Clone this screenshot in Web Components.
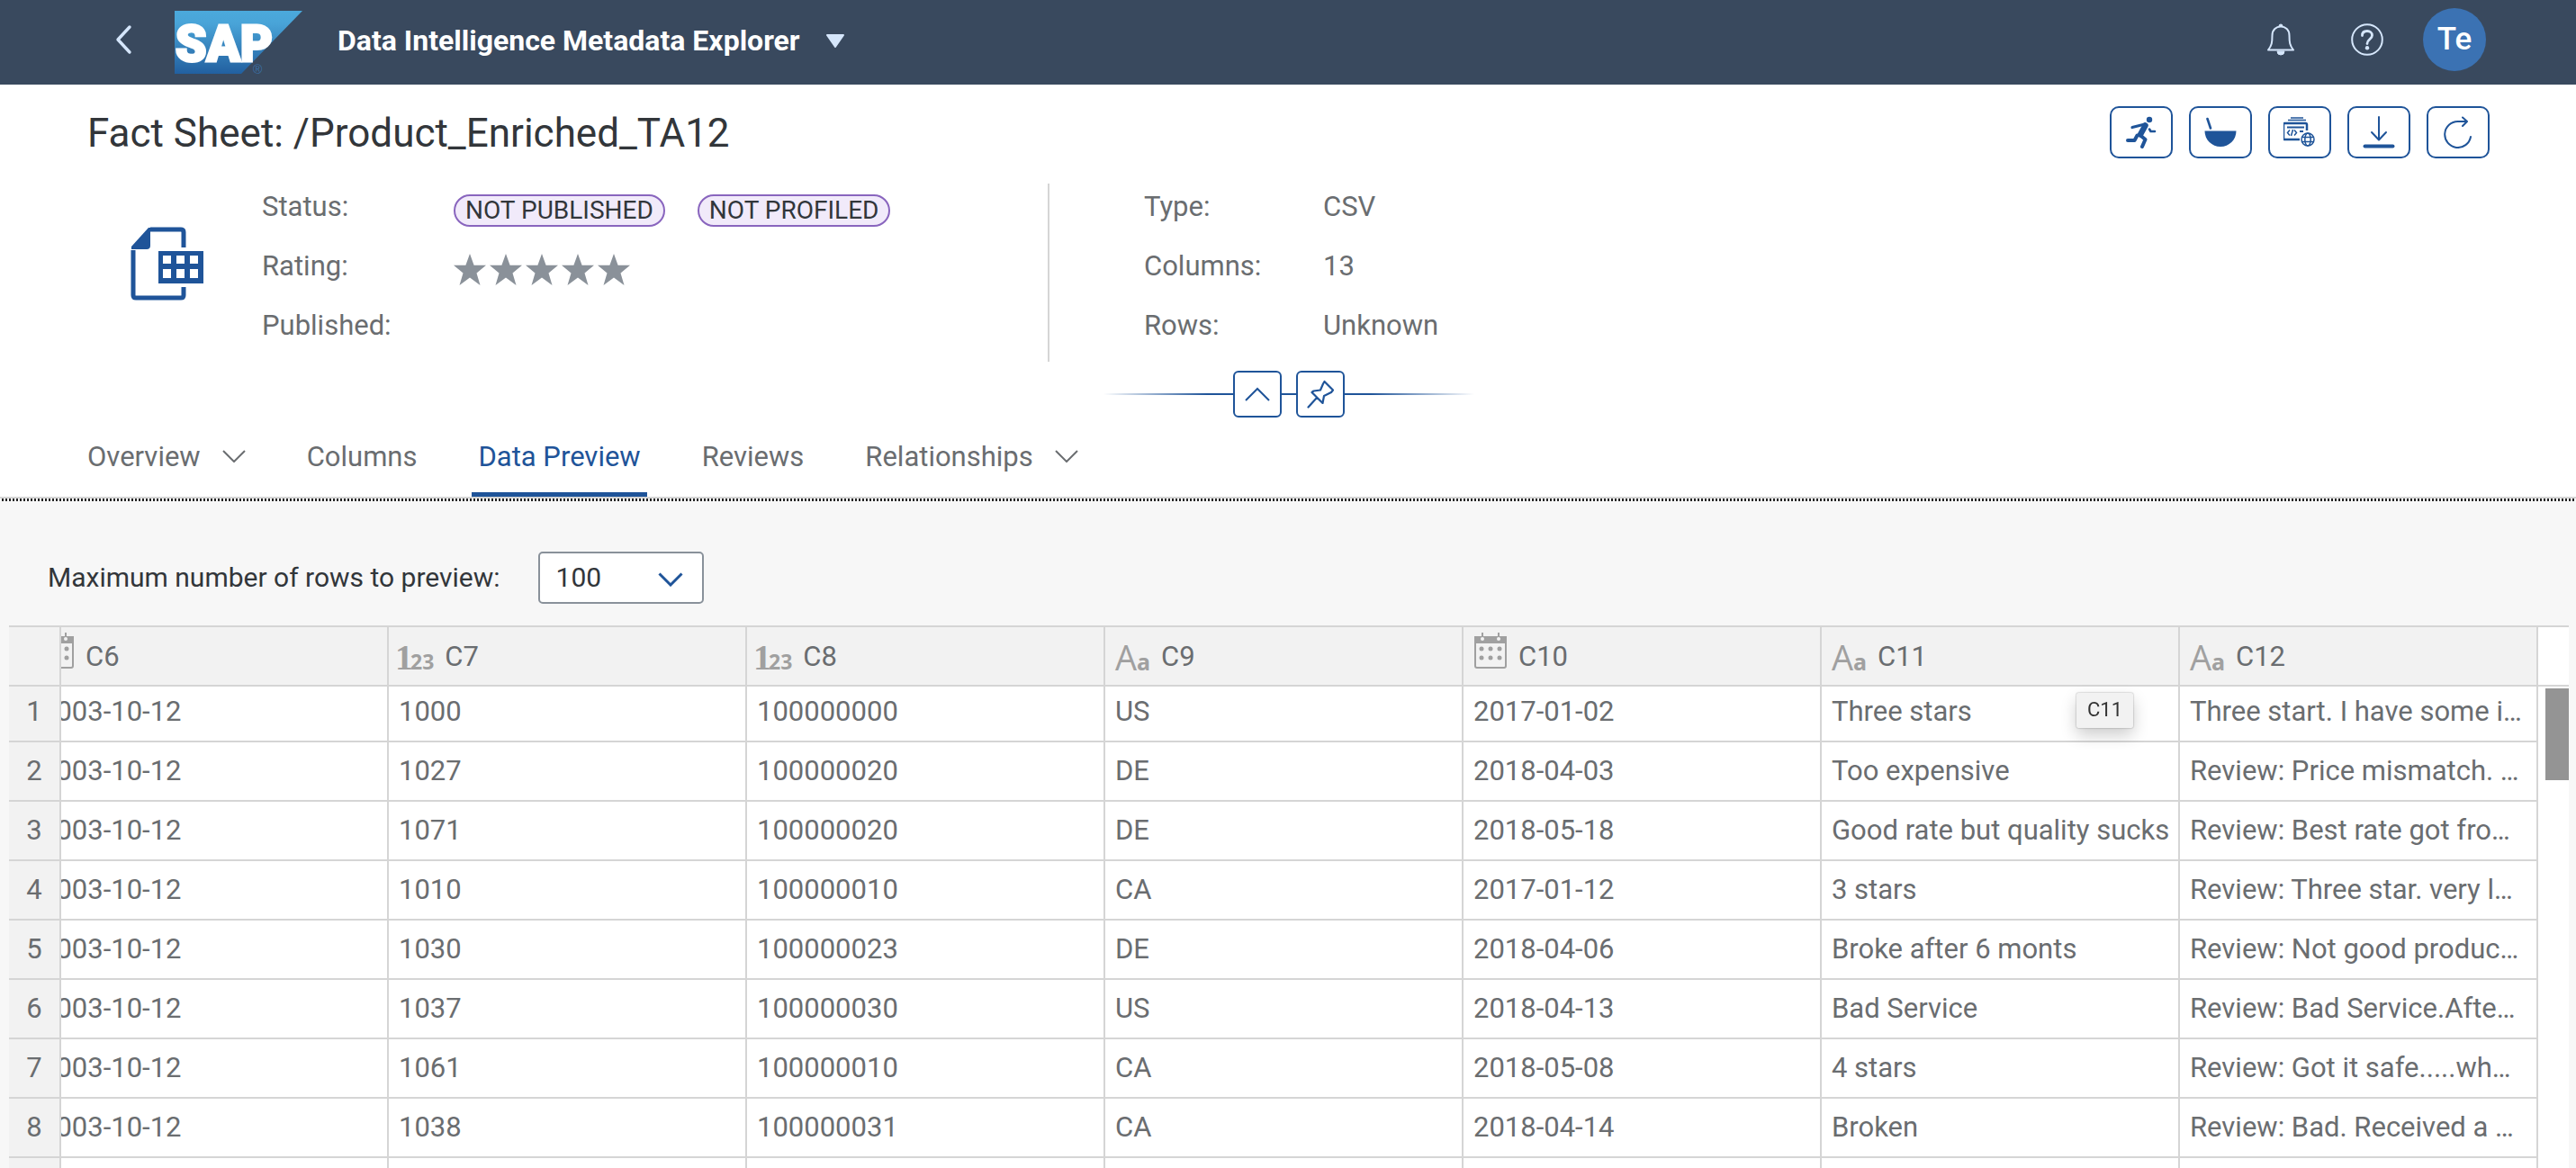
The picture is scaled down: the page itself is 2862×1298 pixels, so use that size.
<!DOCTYPE html>
<html lang="en">
<head>
<meta charset="utf-8">
<title>Data Intelligence Metadata Explorer</title>
<style>
  html, body { height: 100%; margin: 0; }
  body {
    font-family: Roboto, "Liberation Sans", sans-serif;
    font-size: 31px; line-height: 36px; color: #6a6d70; background: #f7f7f7;
    --brand: #1f5499; --line: #d5d5d5; --ink: #32363a;
  }
</style>
</head>
<body>
<fact-page></fact-page>
<script>
const define = (name, css, html, ready) => {
  const t = document.createElement('template');
  t.innerHTML = `<style>*{box-sizing:border-box}button,select{font:inherit}svg{display:block;fill:none;stroke:currentColor;stroke-width:2}${css}</style>${html}`;
  customElements.define(name, class extends HTMLElement {
    connectedCallback() {
      if (this.shadowRoot) return;
      this.attachShadow({ mode: 'open' }).append(t.content.cloneNode(true));
      if (ready) ready.call(this, this.shadowRoot);
    }
  });
};

define('shell-bar', `
  :host { display: flex; align-items: center; height: 94px; flex: none; background: #39495e; color: #d5e6fb; padding: 0 100px 6px 116px; }
  button { background: none; border: 0; padding: 0; color: inherit; display: flex; align-items: center; justify-content: center; }
  .back { width: 42px; height: 48px; margin-right: 36px; }
  .title { font-size: 32px; font-weight: 700; color: #fff; gap: 28px; margin-left: 39px; padding-top: 2px; }
  .title svg { color: #d5e6fb; }
  .logo { overflow: visible; margin-top: 6px; }
  .logo text { font: 900 55px Roboto, "Liberation Sans", sans-serif; fill: #fff; stroke: #fff; stroke-width: 3; }
  .logo .reg { font: 14px "Liberation Sans", sans-serif; fill: #3a71a8; stroke: none; }
  .tools { margin-left: auto; display: flex; align-items: center; }
  .tools button { width: 96px; height: 60px; }
  .tools .avatar { width: 70px; height: 70px; border-radius: 50%; background: #3b72b3; color: #fff; font-size: 35px; font-weight: 500; margin-left: 14px; }
`, `
  <button class="back" aria-label="Back"><svg width="20" height="34" viewBox="0 0 20 34"><path d="M17 3 4 17l13 14" stroke-width="3.4" stroke-linecap="round" stroke-linejoin="round"/></svg></button>
  <svg class="logo" width="142" height="70" viewBox="0 0 142 70" role="img" aria-label="SAP">
    <defs><linearGradient id="g" x1="0" y1="0" x2="0" y2="1"><stop offset="0" stop-color="#4ba9dc"/><stop offset=".2" stop-color="#49a4d8"/><stop offset="1" stop-color="#2260a0"/></linearGradient></defs>
    <path d="M0 0H142L74 70H0z" fill="url(#g)" stroke="none"/>
    <text x="1" y="56">SAP</text><text class="reg" x="87" y="70">®</text>
  </svg>
  <button class="title">Data Intelligence Metadata Explorer<svg width="22" height="15" viewBox="0 0 22 15"><path d="M2 1h18l-9 13z" fill="currentColor" stroke-linejoin="round"/></svg></button>
  <div class="tools">
    <button aria-label="Notifications"><svg width="32" height="36" viewBox="0 0 32 36"><path d="M2 29.5c4-5 4.500-8.500 4.500-16C6.500 7 11 3.500 16 3.500S25.500 7 25.500 13.500c0 7.500.5 11 4.500 16z" stroke-linejoin="round"/><path d="M14 3a2 2 0 1 1 4 0zM12 31a4 4 0 0 0 8 0z" fill="currentColor" stroke-width="1"/></svg></button>
    <button aria-label="Help"><svg width="36" height="36" viewBox="0 0 36 36"><circle cx="18" cy="18" r="16.800"/><path d="M12.500 13.500C12.500 10 15 8.500 18 8.500s5.500 1.800 5.500 4.700c0 4.300-5.500 4.300-5.500 9.300" stroke-width="2.800" stroke-linecap="round"/><circle cx="18" cy="27.300" r="2.200" fill="currentColor" stroke="none"/></svg></button>
    <button class="avatar">Te</button>
  </div>
`);

define('object-title', `
  :host { display: flex; align-items: flex-start; justify-content: space-between; padding: 24px 96px 0 97px; }
  h1 { margin: 0; font-size: 44px; line-height: 60px; font-weight: 400; color: var(--ink); }
  .actions { display: flex; gap: 18px; }
  button { width: 70px; height: 58px; padding: 0; border: 2px solid var(--brand); border-radius: 10px; background: #fff; color: var(--brand); display: flex; align-items: center; justify-content: center; }
`, `
  <h1>Fact Sheet: /Product_Enriched_TA12</h1>
  <div class="actions">
    <button aria-label="Run"><svg width="36" height="36" viewBox="0 0 36 36" stroke-linecap="round" stroke-linejoin="round"><circle cx="27" cy="4" r="3.200" fill="currentColor" stroke="none"/><path d="M22.500 10.500 17 20.500" stroke-width="6.500"/><path d="M22 9 8 12.500" stroke-width="3.200"/><path d="M27 14.500 28.500 17H33" stroke-width="2.600"/><path d="M16.500 21 22.500 26l-3.500 8M13.500 21.500 10.500 27H3" stroke-width="4"/></svg></button>
    <button aria-label="Prepare data"><svg width="36" height="36" viewBox="0 0 36 36"><path d="M.5 16.500h35c0 10-8 17.500-17.500 17.500S.5 26.500.5 16.500z" fill="currentColor" stroke="none"/><path d="M3.500 3 7 13.500" stroke-width="2.600" stroke-linecap="round"/></svg></button>
    <button aria-label="Publish"><svg width="36" height="36" viewBox="0 0 36 36"><path d="M8 2h14M5 4.500h20" stroke-width="1.500"/><path d="M18 26H1.500Q0 26 0 24.500V9.500Q0 8 1.500 8h23Q26 8 26 9.500V16" stroke-width="2.500"/><path d="M4 12.500h19M18 17h4" stroke-width="2"/><path d="m7 15.500-2.500 3 2.500 3M12 15.500l2.500 3-2.500 3M10.500 15l-2 7" stroke-width="1.500"/><g stroke-width="1.500"><circle cx="27" cy="26" r="7"/><ellipse cx="27" cy="26" rx="3.200" ry="7"/><path d="M21 23.500h12M21 28.500h12"/></g></svg></button>
    <button aria-label="Download"><svg width="36" height="36" viewBox="0 0 36 36" stroke-linecap="round" stroke-linejoin="round"><path d="M18 1v25M10 18l8 8.500 8-8.500"/><path d="M2.500 33.500h31" stroke-width="4"/></svg></button>
    <button aria-label="Refresh"><svg width="36" height="36" viewBox="0 0 36 36" stroke-linecap="round" stroke-linejoin="round"><path d="M32 23A14.500 14.500 0 1 1 18 6h9M23 1.500 28 6l-5 5"/></svg></button>
  </div>
`);

define('star-rating', `
  :host { display: flex; gap: 4px; color: #8a9199; }
`, ``, function (root) {
  const star = '<svg width="36" height="36" viewBox="0 0 36 36"><path d="m18 0 4.600 12.700H36L25.500 21.500 29.500 35 18 26.500 6.500 35l4-13.500L0 12.700h13.400z" fill="currentColor" stroke="none"/></svg>';
  const t = document.createElement('template');
  t.innerHTML = star.repeat(5);
  root.append(t.content);
});

define('status-badge', `
  :host { display: block; height: 36px; border: 2px solid #8965be; border-radius: 18px; background: #f1eafa; color: var(--ink); padding: 0 11px; font-size: 28px; line-height: 32px; }
`, `<slot></slot>`);

define('object-facts', `
  :host { display: flex; align-items: flex-start; padding: 26px 100px 0 143px; color: #6a6d70; }
  .doc { flex: none; color: var(--brand); margin: 47px 64px 0 0; }
  dl { display: grid; grid-auto-rows: 66px; align-items: center; margin: 0; }
  dl.a { grid-template-columns: 213px 660px; border-right: 2px solid var(--line); }
  dl.b { grid-template-columns: 199px 1fr; margin-left: 105px; }
  dt, dd { margin: 0 0 14px; height: 36px; display: flex; align-items: center; gap: 36px; }
  dd > status-badge, dd > star-rating { margin-top: 7px; }
`, `
  <svg class="doc" width="84" height="84" viewBox="0 0 84 84" role="img" aria-label="Data set">
    <path d="M24 4h34q3 0 3 3v17M61 68v9q0 3-3 3H8q-3 0-3-3V27" stroke-width="5"/>
    <path d="M24 2v20q0 4-4 4H3v-3L22 2z" fill="currentColor" stroke="none"/>
    <path d="M33 28h50v36H33z" fill="currentColor" stroke="none"/>
    <path d="M38 33h9v9h-9zM53 33h9v9h-9zM68 33h9v9h-9zM38 48h9v10h-9zM53 48h9v10h-9zM68 48h9v10h-9z" fill="#fff" stroke="none"/>
  </svg>
  <dl class="a">
    <dt>Status:</dt><dd><status-badge>NOT PUBLISHED</status-badge><status-badge>NOT PROFILED</status-badge></dd>
    <dt>Rating:</dt><dd><star-rating></star-rating></dd>
    <dt>Published:</dt><dd></dd>
  </dl>
  <dl class="b">
    <dt>Type:</dt><dd>CSV</dd>
    <dt>Columns:</dt><dd>13</dd>
    <dt>Rows:</dt><dd>Unknown</dd>
  </dl>
`);

define('header-toggles', `
  :host { display: flex; align-items: center; justify-content: center; padding: 10px 0 0 2px; }
  i { width: 144px; height: 2px; background: linear-gradient(90deg, transparent, var(--brand) 80%); }
  i.mid { width: 16px; background: var(--brand); }
  i.end { background: linear-gradient(270deg, transparent, var(--brand) 80%); }
  button { width: 54px; height: 52px; padding: 0; border: 2px solid var(--brand); border-radius: 6px; background: #fff; color: var(--brand); display: flex; align-items: center; justify-content: center; }
`, `
  <i></i><button aria-label="Collapse header"><svg width="28" height="16" viewBox="0 0 28 16"><path d="M1 15 14 2l13 13"/></svg></button>
  <i class="mid"></i><button aria-label="Pin header"><svg width="30" height="32" viewBox="0 0 30 32" stroke-linejoin="round" stroke-linecap="round"><path d="M1.500 30.500 11 20M19.500 2l9.500 9.500-2 2.500-8 4-1.500 8L5.500 14l2-1.500 7.500-1 3-7z" stroke-width="2.200"/></svg></button>
  <i class="end"></i>
`);

define('section-tabs', `
  :host { display: block; }
  nav { display: flex; gap: 54px; padding: 6px 90px 0; }
  a { color: inherit; text-decoration: none; padding: 20px 7px 0; display: flex; gap: 24px; height: 82px; line-height: 36px; }
  a[aria-current] { color: var(--brand); border-bottom: 5px solid var(--brand); border-radius: 4px 4px 0 0; }
  svg { margin-top: 10px; }
`, `
  <nav>
    <a href="#overview">Overview<svg width="26" height="14" viewBox="0 0 26 14"><path d="m1 1 12 12L25 1"/></svg></a>
    <a href="#columns">Columns</a>
    <a href="#preview" aria-current="page">Data Preview</a>
    <a href="#reviews">Reviews</a>
    <a href="#relationships">Relationships<svg width="26" height="14" viewBox="0 0 26 14"><path d="m1 1 12 12L25 1"/></svg></a>
  </nav>
`);

define('preview-toolbar', `
  :host { display: flex; align-items: center; gap: 42px; padding: 56px 53px 24px; color: var(--ink); font-size: 30px; }
  .box { display: grid; align-items: center; width: 184px; height: 58px; }
  .box > * { grid-area: 1 / 1; }
  select { appearance: none; width: 100%; height: 100%; border: 2px solid #89919a; border-radius: 5px; background: #fff; padding: 0 18px; color: var(--ink); }
  svg { justify-self: end; margin: 4px 23px 0 0; color: var(--brand); pointer-events: none; stroke-width: 3; }
`, `
  <label for="rows">Maximum number of rows to preview:</label>
  <div class="box"><select id="rows"><option>100</option></select><svg width="28" height="16" viewBox="0 0 28 16"><path d="m1.500 1.500 12.500 12.500 12.500-12.500"/></svg></div>
`);

define('type-icon', `
  :host { display: block; flex: none; color: #a0a0a0; }
  svg { display: none; }
  :host([kind=date]) svg { display: block; margin: 0 1px 14px; }
  span { display: none; align-items: baseline; }
  :host([kind=number]) .n, :host([kind=text]) .t { display: flex; }
  b { font: 700 25px "Noto Sans", sans-serif; }
  .n em { font: 700 40px "Liberation Serif", serif; margin: 0 -3px 0 -4px; }
  .n b { font-size: 23px; }
  .t em { font: 400 38px "Open Sans", sans-serif; }
`, `
  <span class="n"><em>1</em><b>23</b></span><span class="t"><em>A</em><b>a</b></span>
  <svg width="36" height="40" viewBox="0 0 36 40"><path d="M3 5h30q2 0 2 2v30q0 2-2 2H3q-2 0-2-2V7q0-2 2-2z"/><path d="M1 5h34v6H1zM9 0v6M27 0v6" fill="currentColor"/><g fill="#f2f2f2" stroke="none"><circle cx="9" cy="7" r="2"/><circle cx="27" cy="7" r="2"/></g><g fill="currentColor" stroke="none"><circle cx="8" cy="18" r="2.500"/><circle cx="18" cy="18" r="2.500"/><circle cx="28" cy="18" r="2.500"/><circle cx="8" cy="28" r="2.500"/><circle cx="18" cy="28" r="2.500"/><circle cx="28" cy="28" r="2.500"/></g></svg>
`);

const COLUMNS = [['C6', 'date'], ['C7', 'number'], ['C8', 'number'], ['C9', 'text'], ['C10', 'date'], ['C11', 'text'], ['C12', 'text']];
const ROWS = [
  ['2003-10-12', '1000', '100000000', 'US', '2017-01-02', 'Three stars', 'Three start. I have some i…'],
  ['2003-10-12', '1027', '100000020', 'DE', '2018-04-03', 'Too expensive', 'Review: Price mismatch. …'],
  ['2003-10-12', '1071', '100000020', 'DE', '2018-05-18', 'Good rate but quality sucks', 'Review: Best rate got fro…'],
  ['2003-10-12', '1010', '100000010', 'CA', '2017-01-12', '3 stars', 'Review: Three star. very l…'],
  ['2003-10-12', '1030', '100000023', 'DE', '2018-04-06', 'Broke after 6 monts', 'Review: Not good produc…'],
  ['2003-10-12', '1037', '100000030', 'US', '2018-04-13', 'Bad Service', 'Review: Bad Service.Afte…'],
  ['2003-10-12', '1061', '100000010', 'CA', '2018-05-08', '4 stars', 'Review: Got it safe.....wh…'],
  ['2003-10-12', '1038', '100000031', 'CA', '2018-04-14', 'Broken', 'Review: Bad. Received a …'],
  ['', '', '', '', '', '', '']
];

define('data-grid', `
  :host { position: relative; display: flex; flex: 1; min-height: 0; margin: 0 8px 0 10px; background: #fff; }
  .scroll { flex: 1; min-width: 0; overflow: auto; scrollbar-width: none; }
  table { border-collapse: separate; border-spacing: 0; table-layout: fixed; width: 2844px; }
  col.num { width: 58px; }
  th, td { height: 66px; padding: 0 8px 0 11px; border: solid var(--line); border-width: 0 2px 2px 0; text-align: left; font-weight: 400; white-space: nowrap; overflow: hidden; background: #fff; }
  th { background: #f2f2f2; }
  thead th { position: sticky; top: 0; z-index: 1; height: 68px; border-top-width: 2px; }
  .head { display: flex; align-items: center; gap: 12px; height: 64px; padding-top: 2px; }
  tr > :first-child { position: sticky; left: 0; z-index: 1; padding: 0; text-align: center; }
  thead tr > :first-child { z-index: 2; }
  .rail { width: 34px; flex: none; border-top: 2px solid var(--line); display: flex; flex-direction: column; }
  .rail .cap { height: 66px; border-bottom: 2px solid var(--line); }
  .rail .thumb { width: 26px; height: 102px; margin: 2px 0 0 8px; background: #949494; }
  .tip { position: absolute; left: 2297px; top: 75px; z-index: 3; height: 39px; padding: 0 12px; background: #f2f2f2; color: #333; font-size: 22px; line-height: 38px; box-shadow: 0 0 2px #0006, 0 8px 18px #0003; border-radius: 2px; }
`, `
  <div class="scroll"><table><colgroup><col class="num"><col span="7"></colgroup><thead></thead><tbody></tbody></table></div>
  <div class="rail"><div class="cap"></div><div class="thumb"></div></div>
  <div class="tip" role="tooltip">C11</div>
`, function (root) {
  root.querySelector('thead').innerHTML = '<tr><th></th>' + COLUMNS.map(([n, k]) => `<th scope="col"><div class="head"><type-icon kind="${k}"></type-icon><span>${n}</span></div></th>`).join('') + '</tr>';
  root.querySelector('tbody').innerHTML = ROWS.map((r, i) => `<tr><th scope="row">${r[0] ? i + 1 : ''}</th>${r.map(c => `<td>${c}</td>`).join('')}</tr>`).join('');
  const s = root.querySelector('.scroll');
  requestAnimationFrame(() => { s.scrollLeft = 34; s.scrollTop = 4; });
});

define('fact-page', `
  :host { display: flex; flex-direction: column; height: 100vh; overflow: hidden; }
  header { background: #fff; flex: none; border-bottom: 2px solid var(--line); }
  .rule { height: 3px; flex: none; background: repeating-linear-gradient(90deg, #fff 0 2px, #222 2px 4px); }
`, `
  <shell-bar></shell-bar>
  <header><object-title></object-title><object-facts></object-facts><header-toggles></header-toggles><section-tabs></section-tabs></header>
  <div class="rule"></div>
  <preview-toolbar></preview-toolbar>
  <data-grid></data-grid>
`);
</script>
</body>
</html>
